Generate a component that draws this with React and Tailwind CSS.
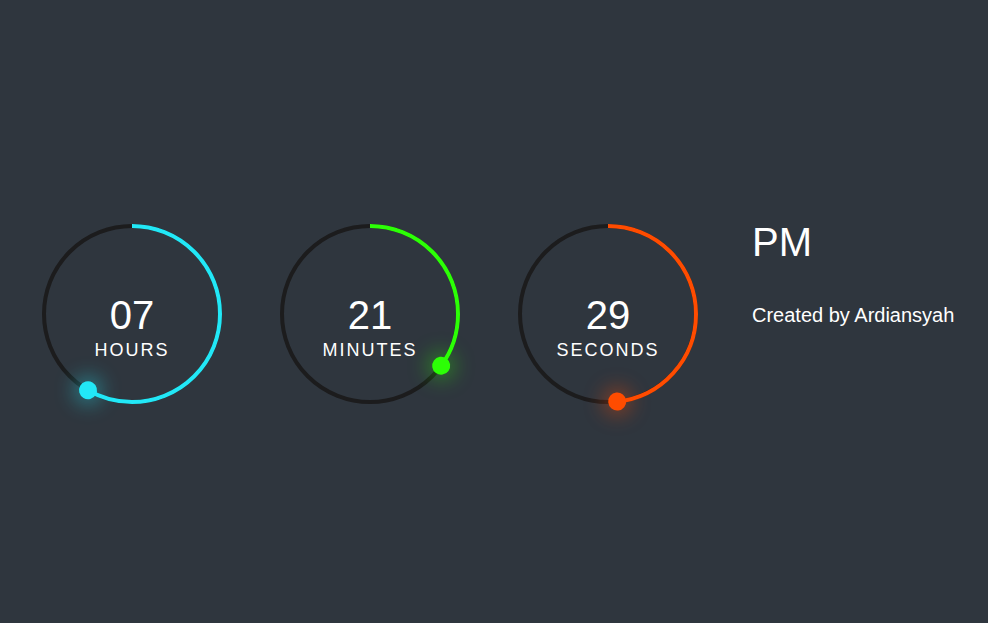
import React from 'react';

const R = 88;
const C = 2 * Math.PI * R;

const units = [
  {
    value: '07',
    label: 'HOURS',
    progress: 7 / 12,
    color: '#22e8f7',
    dot: 'bg-[#22e8f7] shadow-[0_0_20px_5px_rgba(34,232,247,0.4)]',
  },
  {
    value: '21',
    label: 'MINUTES',
    progress: 21 / 60,
    color: '#2cff06',
    dot: 'bg-[#2cff06] shadow-[0_0_20px_5px_rgba(44,255,6,0.35)]',
  },
  {
    value: '29',
    label: 'SECONDS',
    progress: 29 / 60,
    color: '#ff4c00',
    dot: 'bg-[#ff4c00] shadow-[0_0_20px_5px_rgba(255,76,0,0.4)]',
  },
];

const Ring = ({ value, label, progress, color, dot }) => {
  return (
    <div className="relative w-[180px] h-[180px] shrink-0">
      {/* track + progress arc */}
      <svg width="180" height="180" viewBox="0 0 180 180" className="absolute inset-0 -rotate-90">
        <circle cx="90" cy="90" r={R} fill="none" stroke="#1c1c1d" strokeWidth="4" />
        <circle
          cx="90"
          cy="90"
          r={R}
          fill="none"
          stroke={color}
          strokeWidth="4"
          strokeDasharray={C}
          strokeDashoffset={C * (1 - progress)}
        />
      </svg>

      {/* dot at the end of the arc */}
      <div className="absolute inset-0" style={{ transform: `rotate(${progress * 360}deg)` }}>
        <div className={`absolute left-[81px] top-[-7px] w-[18px] h-[18px] rounded-full ${dot}`} />
      </div>

      {/* readout */}
      <div className="absolute inset-0 flex flex-col items-center pt-[71px] text-white">
        <span className="text-[40px] leading-none">{value}</span>
        <span className="mt-[6px] text-[18px] leading-none tracking-[2px]">{label}</span>
      </div>
    </div>
  );
};

export default function App() {
  return (
    <div className="w-full h-[623px] bg-[#2f363e] font-['Liberation_Sans',Arial,sans-serif] overflow-hidden">
      <div className="flex items-start pt-[224px] pl-[42px]">
        <div className="flex gap-[58px]">
          {units.map((u) => (
            <Ring key={u.label} {...u} />
          ))}
        </div>
        <div className="ml-[54px] -mt-[5px] flex flex-col text-white">
          <span className="text-[40px] leading-[46px]">PM</span>
          <span className="mt-[39px] text-[20px] leading-[23px]">Created by Ardiansyah</span>
        </div>
      </div>
    </div>
  );
}
